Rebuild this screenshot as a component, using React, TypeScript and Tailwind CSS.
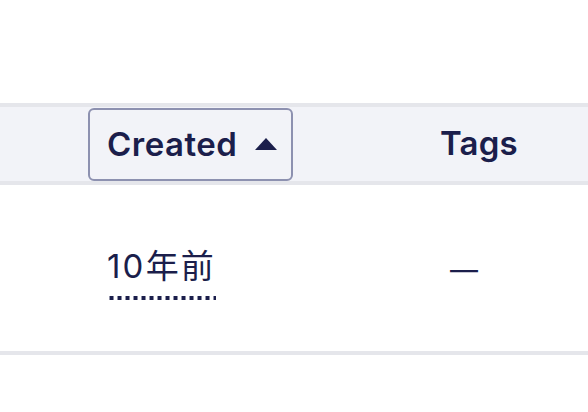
export default function App() {
  return (
    <div className="w-[588px] h-[412px] bg-white text-[#1b1e4b] font-['Inter','Noto_Sans_CJK_JP',sans-serif] overflow-hidden">
      <div className="h-[103px]" />
      <div className="flex h-[82px] bg-[#f2f3f8] border-y-4 border-[#e5e6eb]">
        <div className="w-[400px] pl-[88px] pt-px">
          <button className="flex items-center gap-[18px] h-[73px] pl-[17px] pr-[14px] border-2 border-[#8d91b0] rounded-md text-[33px] font-semibold tracking-[0.5px]">
            Created
            <svg width="22" height="12" viewBox="0 0 22 12" className="mt-[-2px]">
              <path d="M11 0L22 12H0Z" fill="currentColor" />
            </svg>
          </button>
        </div>
        <div className="flex items-center pl-[40px] text-[33px] font-semibold tracking-[0.2px]">Tags</div>
      </div>
      <div className="flex h-[170px] border-b-4 border-[#e5e6eb]">
        <div className="w-[400px] pl-[107px] flex items-center">
          <span className="pb-[17px] mt-[12px] text-[33px] leading-[34px] tracking-[2.2px] bg-[linear-gradient(to_right,#1b1e4b_50%,transparent_50%)] bg-[length:8px_4px] bg-repeat-x bg-bottom">
            10年前
          </span>
        </div>
        <div className="flex items-center pl-[50px] pt-[4px] text-[28px]">—</div>
      </div>
    </div>
  )
}
